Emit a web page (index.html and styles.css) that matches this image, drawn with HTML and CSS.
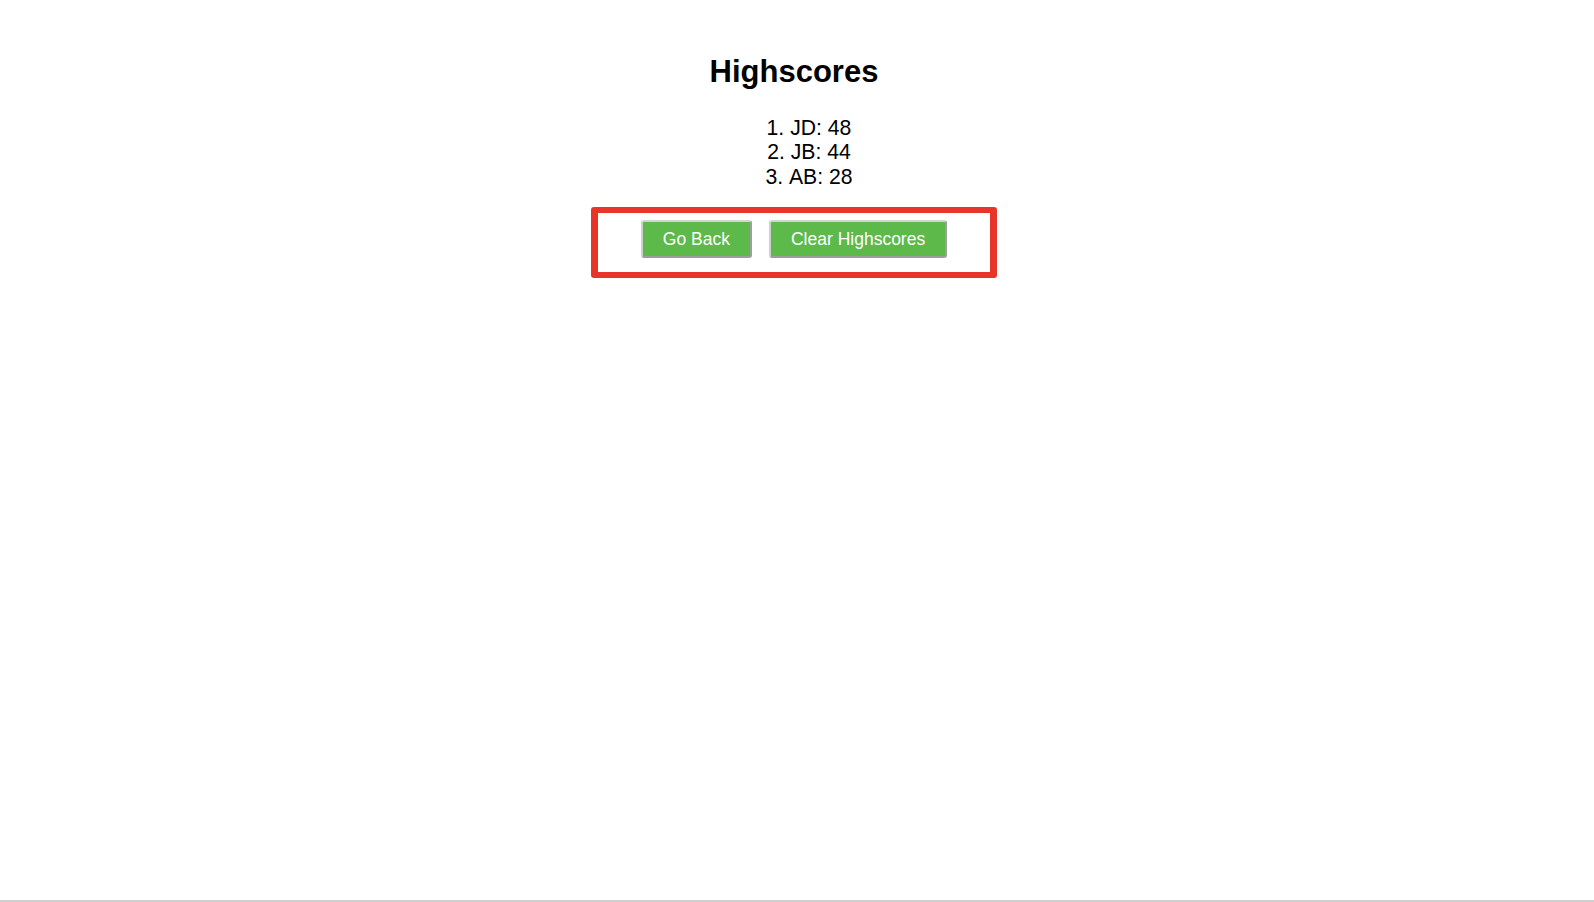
FILE: index.html
```html
<!DOCTYPE html>
<html lang="en">
<head>
<meta charset="utf-8">
<title>Highscores</title>
<link rel="stylesheet" href="styles.css">
</head>
<body>
<main class="page">
  <h1 class="title">Highscores</h1>
  <ol class="scores">
    <li>JD: 48</li>
    <li>JB: 44</li>
    <li>AB: 28</li>
  </ol>
  <div class="actions">
    <button class="btn" type="button">Go Back</button>
    <button class="btn" type="button">Clear Highscores</button>
  </div>
</main>
<div class="window-edge"></div>
</body>
</html>
```
FILE: styles.css
```css
html, body {
  margin: 0;
  padding: 0;
  background: #ffffff;
}
body {
  width: 1594px;
  height: 902px;
  display: flex;
  flex-direction: column;
  font-family: "Liberation Sans", Arial, sans-serif;
  color: #000;
  overflow: hidden;
}
.page {
  flex: 1;
  display: flex;
  flex-direction: column;
  align-items: center;
  padding-right: 6px;
  padding-top: 54px;
}
.title {
  margin: 0;
  font-size: 31px;
  line-height: 36px;
  font-weight: bold;
}
.scores {
  margin: 26px 0 0 0;
  padding: 0 0 0 30px;
  list-style-position: inside;
  text-align: center;
  font-size: 21.2px;
  line-height: 24.4px;
}
.actions {
  margin-top: 18px;
  width: 392px;
  height: 52px;
  border: 7px solid #e8352a;
  border-top-width: 6px;
  border-bottom-width: 6px;
  border-radius: 3px;
  display: flex;
  justify-content: center;
  align-items: flex-start;
  gap: 17px;
  padding-top: 7px;
  box-sizing: content-box;
}
.btn {
  font-family: "Liberation Sans", Arial, sans-serif;
  font-size: 17.5px;
  line-height: 20px;
  color: #ffffff;
  background: #5cb94a;
  border: 2px solid;
  border-color: #d4d4d4 #9e9e9e #9e9e9e #cfcfcf;
  border-radius: 3px;
  padding: 7px 20px;
  height: 38px;
  box-sizing: border-box;
  cursor: pointer;
}
.window-edge {
  height: 2px;
  background: #cfcfcf;
}
```
